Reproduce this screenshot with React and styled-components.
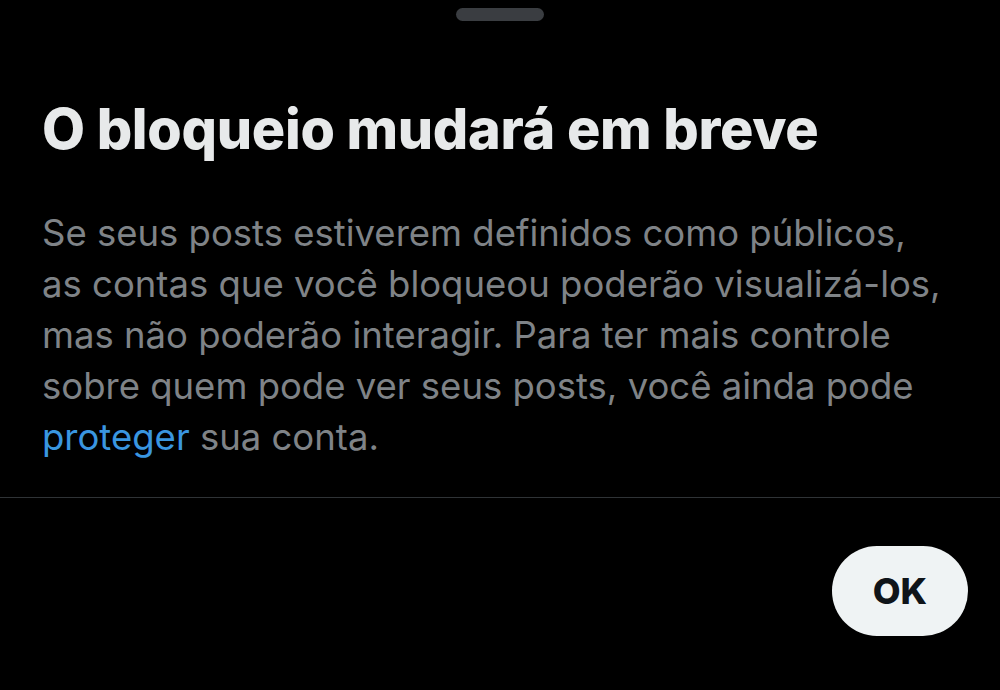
import React from "react"
import styled, { createGlobalStyle } from "styled-components"

const GlobalStyle = createGlobalStyle`
  html, body {
    margin: 0;
    padding: 0;
    background: #000;
  }
  body {
    font-family: Inter, Roboto, "Liberation Sans", sans-serif;
  }
`

const Sheet = styled.div`
  width: 1000px;
  height: 690px;
  background: #000;
  display: flex;
  flex-direction: column;
  overflow: hidden;
`

const HandleRow = styled.div`
  display: flex;
  justify-content: center;
  padding-top: 8px;
`

const Handle = styled.div`
  width: 88px;
  height: 13px;
  border-radius: 7px;
  background: #3a3d41;
`

const Content = styled.div`
  padding: 76px 42px 0 42px;
  display: flex;
  flex-direction: column;
`

const Title = styled.h1`
  margin: 0;
  color: #e7e9ea;
  font-size: 55.7px;
  font-weight: 800;
  line-height: 64px;
  letter-spacing: -0.3px;
`

const Body = styled.p`
  margin: 47px 0 0 0;
  color: #7f8387;
  font-size: 36.5px;
  line-height: 51px;
  font-weight: 400;
`

const Link = styled.a`
  color: #3a96e0;
  text-decoration: none;
`

const Divider = styled.div`
  margin-top: 34px;
  height: 1px;
  background: #2f3336;
`

const Footer = styled.div`
  display: flex;
  justify-content: flex-end;
  padding: 48px 32px 0 0;
`

const Button = styled.button`
  width: 136px;
  height: 90px;
  border: none;
  border-radius: 45px;
  background: #eff3f4;
  color: #0f1419;
  font-family: inherit;
  font-size: 36px;
  font-weight: 800;
  cursor: pointer;
`

export default function App() {
  return (
    <>
      <GlobalStyle />
      <Sheet>
        <HandleRow>
          <Handle />
        </HandleRow>
        <Content>
          <Title>O bloqueio mudará em breve</Title>
          <Body>
            Se seus posts estiverem definidos como públicos,
            <br />
            as contas que você bloqueou poderão visualizá-los,
            <br />
            mas não poderão interagir. Para ter mais controle
            <br />
            sobre quem pode ver seus posts, você ainda pode
            <br />
            <Link href="#">proteger</Link> sua conta.
          </Body>
        </Content>
        <Divider />
        <Footer>
          <Button>OK</Button>
        </Footer>
      </Sheet>
    </>
  )
}
